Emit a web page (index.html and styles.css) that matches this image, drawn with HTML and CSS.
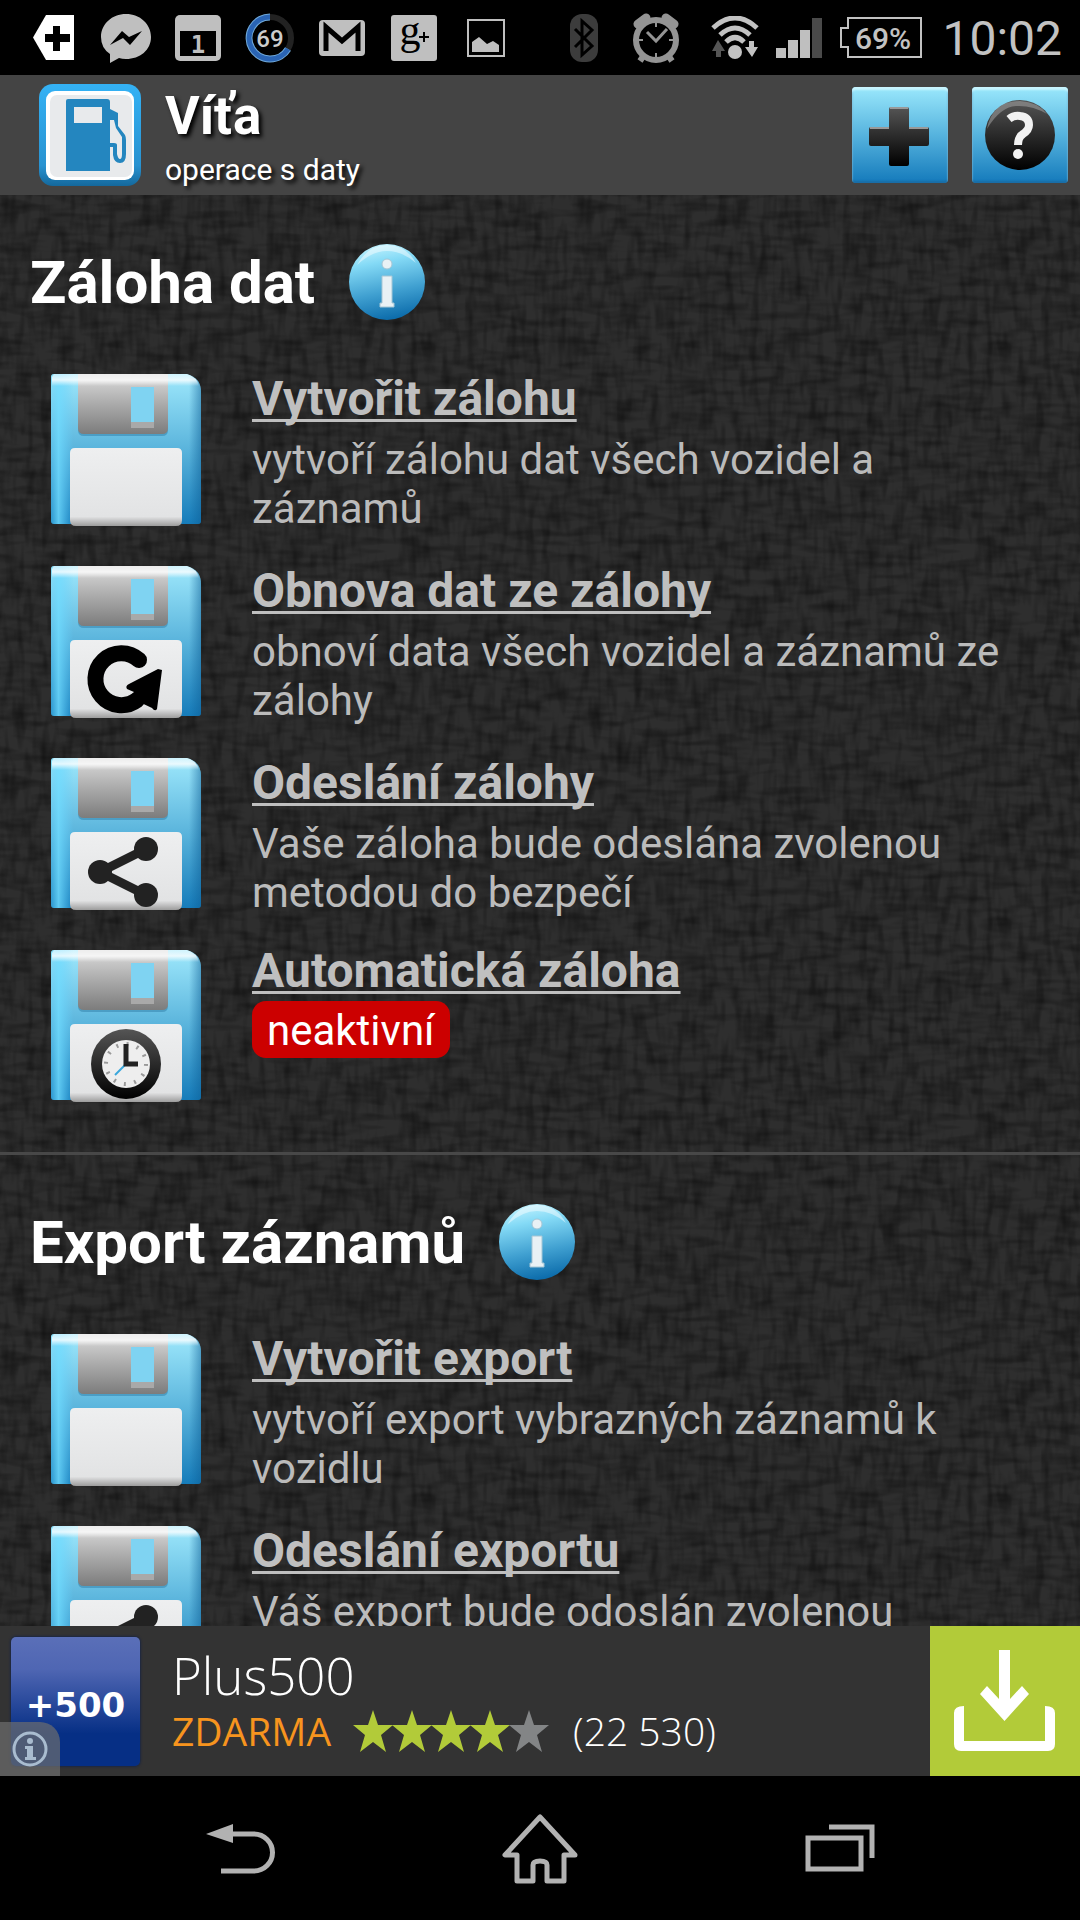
FILE: index.html
```html
<!DOCTYPE html>
<html lang="cs">
<head>
<meta charset="utf-8">
<meta name="viewport" content="width=device-width, initial-scale=1">
<title>Víťa - operace s daty</title>
<link rel="stylesheet" href="styles.css">
</head>
<body>

<!-- shared icon parts -->
<svg class="defs" aria-hidden="true">
  <defs>
    <linearGradient id="blue" x1="0" y1="0" x2="0" y2="1">
      <stop offset="0" stop-color="#9ee8fc"/>
      <stop offset="0.5" stop-color="#5ab4dc"/>
      <stop offset="1" stop-color="#167cba"/>
    </linearGradient>
    <linearGradient id="side" x1="0" y1="0" x2="1" y2="0">
      <stop offset="0" stop-color="#5fd0f8" stop-opacity="0.3"/>
      <stop offset="0.05" stop-color="#6fdcff" stop-opacity="0.8"/>
      <stop offset="0.15" stop-color="#5fd0ff" stop-opacity="0"/>
      <stop offset="0.92" stop-color="#0b5c94" stop-opacity="0"/>
      <stop offset="1" stop-color="#0b5c94" stop-opacity="0.5"/>
    </linearGradient>
    <linearGradient id="shine" x1="0" y1="0" x2="0" y2="1">
      <stop offset="0" stop-color="#fff" stop-opacity="0.5"/>
      <stop offset="0.5" stop-color="#fff" stop-opacity="0.8"/>
      <stop offset="1" stop-color="#fff" stop-opacity="0"/>
    </linearGradient>
    <linearGradient id="metal" x1="0" y1="0" x2="0" y2="1">
      <stop offset="0" stop-color="#dcdcdc"/>
      <stop offset="0.4" stop-color="#b4b4b4"/>
      <stop offset="1" stop-color="#7c7c7c"/>
    </linearGradient>
    <linearGradient id="paper" x1="0" y1="0" x2="0" y2="1">
      <stop offset="0" stop-color="#eeeff0"/>
      <stop offset="0.88" stop-color="#e2e3e4"/>
      <stop offset="1" stop-color="#9c9c9c"/>
    </linearGradient>
    <linearGradient id="dark" x1="0" y1="0" x2="0" y2="1">
      <stop offset="0" stop-color="#555"/>
      <stop offset="0.5" stop-color="#2a2a2a"/>
      <stop offset="1" stop-color="#000"/>
    </linearGradient>
    <linearGradient id="ball" x1="0.3" y1="0" x2="0.5" y2="1">
      <stop offset="0" stop-color="#c5f4ff"/>
      <stop offset="0.25" stop-color="#84daf6"/>
      <stop offset="0.65" stop-color="#3f9fd0"/>
      <stop offset="1" stop-color="#0c6cab"/>
    </linearGradient>
    <linearGradient id="frame" x1="0" y1="0" x2="0" y2="1">
      <stop offset="0" stop-color="#34b2f5"/>
      <stop offset="0.8" stop-color="#2992d0"/>
      <stop offset="1" stop-color="#14689c"/>
    </linearGradient>
    <symbol id="floppy" viewBox="0 0 150 152">
      <path d="M3 0H136Q150 4 150 18V147Q150 150 147 150H3Q0 150 0 147V3Q0 0 3 0Z" fill="url(#blue)"/>
      <path d="M3 0H136Q150 4 150 18V147Q150 150 147 150H3Q0 150 0 147V3Q0 0 3 0Z" fill="url(#side)"/>
      <path d="M3 0H136Q146 3 148 12H1V3Z" fill="url(#shine)"/>
      <path d="M27 0H117V56Q117 62 111 62H33Q27 62 27 56Z" fill="#2f7ea8" opacity="0.5"/>
      <path d="M27 0H117V54Q117 60 111 60H33Q27 60 27 54Z" fill="url(#metal)"/>
      <path d="M27 0H117V12H27Z" fill="url(#shine)"/>
      <path d="M80 48H103V54H80Z" fill="#a9a9a9"/>
      <path d="M80 13H103V48H80Z" fill="#7fd3f2"/>
      <path d="M24 74H126Q131 74 131 79V146Q131 152 125 152H25Q19 152 19 146V79Q19 74 24 74Z" fill="url(#paper)"/>
    </symbol>
    <symbol id="share" viewBox="0 0 150 152">
      <path d="M95 91L49 114L95 137" fill="none" stroke="#222" stroke-width="9"/>
      <g fill="#222"><circle cx="49" cy="114" r="12"/><circle cx="95" cy="91" r="12"/><circle cx="95" cy="137" r="12"/></g>
    </symbol>
    <symbol id="info" viewBox="0 0 78 78">
      <circle cx="39" cy="39" r="38" fill="url(#ball)"/>
      <path d="M9 22Q20 2 39 2T68 20Q54 8 39 8T9 22Z" fill="#fff" opacity="0.45"/>
      <g fill="#e8f1f5" stroke="#a5c6d5" stroke-width="1">
        <circle cx="39" cy="21" r="5"/>
        <path d="M34 33H44V60H46V64H32V60H34Z"/>
      </g>
    </symbol>
    <symbol id="star" viewBox="0 0 40 42">
      <path d="M20 0L25 15H40L28 25L33 42L20 32L7 42L12 25L0 15H15Z"/>
    </symbol>
  </defs>
</svg>

<div class="statusbar">
  <div class="notifications">
    <svg class="status-icon" viewBox="0 0 72 72"><path fill="#fff" d="M28 13H56V58H28L15 35.500Z"/><path d="M35 24H42V32H52V40H42V49H35V40H27V32H35Z"/></svg>
    <svg class="status-icon" viewBox="0 0 72 72"><path fill="#bfbfbf" d="M36 12C22 12 11 22 11 35Q11 46 20 52V61L29 56Q32 57 36 57C50 57 61 48 61 35S50 12 36 12Z"/><path d="M20 43L32 29L39 35L52 29L40 43L33 36Z"/></svg>
    <svg class="status-icon" viewBox="0 0 72 72"><rect x="13" y="13" width="46" height="46" rx="5" fill="#bfbfbf"/><path d="M18 29H54V54H18Z"/><text x="36" y="51" class="glyph-day">1</text></svg>
    <svg class="status-icon" viewBox="0 0 72 72"><circle cx="36" cy="36" r="21" fill="none" stroke="#222" stroke-width="6"/><path d="M36 15A21 21 0 1 0 54 47" fill="none" stroke="#6fa8d8" stroke-width="7"/><path d="M36 15A21 21 0 1 0 54 47" fill="none" stroke="#2a64b4" stroke-width="5"/><text x="36" y="45" class="glyph-percent">69</text></svg>
    <svg class="status-icon" viewBox="0 0 72 72"><rect x="13" y="18" width="46" height="36" rx="4" fill="#bfbfbf"/><path d="M20 49V25L36 39L52 25V49" fill="none" stroke="#000" stroke-width="5"/></svg>
    <svg class="status-icon" viewBox="0 0 72 72"><rect x="13" y="13" width="46" height="46" rx="3" fill="#bfbfbf"/><text x="32" y="42" class="glyph-g">g</text><path d="M41 35H51M46 30V40" stroke="#000" stroke-width="2"/></svg>
    <svg class="status-icon" viewBox="0 0 72 72"><path d="M18 18H54V54H18Z" fill="none" stroke="#bfbfbf" stroke-width="2"/><path d="M22 50V40L29 35L37 42L43 39L49 43V50Z" fill="#bfbfbf"/></svg>
  </div>
  <div class="system">
    <svg class="bluetooth" viewBox="0 0 28 48"><rect width="28" height="48" rx="12" fill="#3c3c3c"/><path d="M5 15L22 32L12 41V7L22 16L5 33" fill="none" stroke="#000" stroke-width="3"/></svg>
    <svg class="alarm" viewBox="0 0 48 50">
      <g fill="none" stroke="#949494"><circle cx="24" cy="27" r="20" stroke-width="6"/><path d="M6 11L14 5M42 11L34 5" stroke-width="9" stroke-linecap="round"/><path d="M12 42L8 48M36 42L40 48" stroke-width="6"/><path d="M24 9V14M24 40V45M6 27H11M37 27H42" stroke-width="2"/><path d="M15 19L24 28L35 16" stroke-width="3"/></g>
    </svg>
    <svg class="wifi" viewBox="0 0 48 44">
      <g fill="none" stroke="#c2c2c2" stroke-width="5"><path d="M2 12Q24 -8 46 12"/><path d="M9 19Q24 5 39 19"/><path d="M15 26Q24 17 33 26"/></g>
      <circle cx="24" cy="36" r="7" fill="#c2c2c2"/><path d="M7 24L14 35H10V41H5V35H1Z" fill="#555"/><path d="M38 25H43V31H47L41 41L34 31H38Z" fill="#c2c2c2"/>
    </svg>
    <svg class="signal" viewBox="0 0 46 42"><path d="M0 31H10V41H0ZM12 23H22V41H12ZM24 13H34V41H24Z" fill="#bfbfbf"/><path d="M36 1H46V41H36Z" fill="#4a4a4a"/></svg>
    <svg class="battery" viewBox="0 0 82 42"><path d="M8 1H81V40H8V30H1V11H8Z" fill="none" stroke="#c2c2c2" stroke-width="2"/><text x="43" y="32" class="glyph-battery">69%</text></svg>
    <span class="clock">10:02</span>
  </div>
</div>

<header class="header">
  <svg class="logo" viewBox="0 0 102 102">
    <rect width="102" height="102" rx="14" fill="url(#frame)"/>
    <rect x="7" y="7" width="88" height="89" rx="9" fill="#fff"/>
    <rect x="11" y="11" width="82" height="82" rx="7" fill="#e8eaec"/>
    <path d="M27 17Q27 15 29 15H68Q71 15 71 18V25L79 29V42L86 51Q87 53 87 56V70Q87 79 81 79T74 71V63H71V87H27ZM35 23V39H63V23Z" fill="#2486bf" fill-rule="evenodd"/>
    <path d="M71 36H75L77 44L83 53V70Q83 75 81 75T78 70V61Q78 59 75 59H71Z" fill="#e8eaec"/>
  </svg>
  <div class="header-text">
    <h1>Víťa</h1>
    <p>operace s daty</p>
  </div>
  <div class="header-right">
    <button class="square" type="button" aria-label="Přidat">
      <svg viewBox="0 0 96 96"><path d="M39 20H55Q57 20 57 22V40H75Q77 40 77 42V57Q77 59 75 59H57V77Q57 79 55 79H39Q37 79 37 77V59H19Q17 59 17 57V42Q17 40 19 40H37V22Q37 20 39 20Z" fill="url(#dark)"/><path d="M38 21H56M18 41H37M57 41H76" stroke="#999" stroke-width="2"/></svg>
    </button>
    <button class="square" type="button" aria-label="Nápověda">
      <svg viewBox="0 0 96 96"><circle cx="48" cy="48" r="35" fill="url(#dark)"/><path d="M15 42Q20 14 48 14Q66 15 75 27Q60 18 44 19T15 42Z" fill="#aaa" opacity="0.5"/><path d="M37 32Q42 28 48 29Q57 30 57 38Q57 43 51 47Q46 50 46 58" fill="none" stroke="#f2f2f2" stroke-width="8"/><circle cx="46" cy="67" r="5" fill="#f2f2f2"/></svg>
    </button>
  </div>
</header>

<main class="content">
  <section class="section">
    <div class="section-title">
      <h2>Záloha dat</h2>
      <button class="info" type="button" aria-label="Informace o záloze"><svg viewBox="0 0 78 78"><use href="#info"/></svg></button>
    </div>
    <ul class="items">
      <li class="item">
        <svg class="disk" viewBox="0 0 150 152"><use href="#floppy"/></svg>
        <div class="item-text">
          <a href="#zaloha">Vytvořit zálohu</a>
          <p>vytvoří zálohu dat všech vozidel a záznamů</p>
        </div>
      </li>
      <li class="item">
        <svg class="disk" viewBox="0 0 150 152"><use href="#floppy"/>
          <path d="M88 94A26 26 0 1 0 86 134" fill="none" stroke="#000" stroke-width="16" stroke-linecap="round"/>
          <path d="M111 104L106 143Q104 146 101 142L82 133Q79 129 83 126L76 123Q74 120 78 118L107 103Z"/>
        </svg>
        <div class="item-text">
          <a href="#obnova">Obnova dat ze zálohy</a>
          <p>obnoví data všech vozidel a záznamů ze zálohy</p>
        </div>
      </li>
      <li class="item">
        <svg class="disk" viewBox="0 0 150 152"><use href="#floppy"/><use href="#share"/></svg>
        <div class="item-text">
          <a href="#odeslani">Odeslání zálohy</a>
          <p>Vaše záloha bude odeslána zvolenou metodou do bezpečí</p>
        </div>
      </li>
      <li class="item">
        <svg class="disk" viewBox="0 0 150 152"><use href="#floppy"/>
          <circle cx="75" cy="114" r="35" fill="url(#dark)"/>
          <circle cx="75" cy="114" r="24" fill="#eee"/>
          <circle cx="75" cy="114" r="20" fill="none" stroke="#999" stroke-width="4" stroke-dasharray="2 8.470"/>
          <path d="M75 114L64 125" stroke="#3aa7dc" stroke-width="2"/>
          <path d="M75 94V114H87" fill="none" stroke="#222" stroke-width="5"/>
        </svg>
        <div class="item-text item-status">
          <a href="#automaticka">Automatická záloha</a>
          <span class="badge">neaktivní</span>
        </div>
      </li>
    </ul>
  </section>

  <section class="section">
    <div class="section-title">
      <h2>Export záznamů</h2>
      <button class="info" type="button" aria-label="Informace o exportu"><svg viewBox="0 0 78 78"><use href="#info"/></svg></button>
    </div>
    <ul class="items">
      <li class="item">
        <svg class="disk" viewBox="0 0 150 152"><use href="#floppy"/></svg>
        <div class="item-text">
          <a href="#export">Vytvořit export</a>
          <p>vytvoří export vybrazných záznamů k vozidlu</p>
        </div>
      </li>
      <li class="item">
        <svg class="disk" viewBox="0 0 150 152"><use href="#floppy"/><use href="#share"/></svg>
        <div class="item-text">
          <a href="#odeslani-exportu">Odeslání exportu</a>
          <p>Váš export bude odoslán zvolenou</p>
        </div>
      </li>
    </ul>
  </section>
</main>

<aside class="ad">
  <div class="ad-logo">+500</div>
  <div class="ad-text">
    <div class="ad-name">Plus500</div>
    <div class="ad-row">
      <span class="price">ZDARMA</span>
      <svg class="stars" viewBox="0 0 198 42" role="img" aria-label="4 z 5">
        <g fill="#b2cb39">
          <use href="#star" x="0" width="40" height="42"/>
          <use href="#star" x="39" width="40" height="42"/>
          <use href="#star" x="78" width="40" height="42"/>
          <use href="#star" x="117" width="40" height="42"/>
        </g>
        <use href="#star" x="156" width="40" height="42" fill="#838586"/>
      </svg>
      <span class="votes">(22 530)</span>
    </div>
  </div>
  <button class="download" type="button" aria-label="Stáhnout">
    <svg viewBox="0 0 150 150"><path d="M69 24H80V73L92 60L99 68L74.500 95L50 68L57 60L69 73Z" fill="#fff"/><path d="M34 80V115H115V80Q125 80 125 87V118Q125 125 118 125H31Q24 125 24 118V87Q24 80 34 80Z" fill="#fff"/></svg>
  </button>
  <button class="ad-info" type="button" aria-label="O reklamě">
    <svg viewBox="0 0 36 36"><circle cx="18" cy="18" r="16" fill="none" stroke="#a9bccf" stroke-width="3"/><circle cx="18" cy="10" r="3" fill="#a9bccf"/><path d="M13 15H21V26H24V29H13V26H15V18H13Z" fill="#a9bccf"/></svg>
  </button>
</aside>

<nav class="navbar">
  <button type="button" aria-label="Zpět"><svg viewBox="0 0 80 72"><path d="M6 22L33 12V31Z" fill="#b2b2b2"/><path d="M30 22H54A18 18 0 0 1 54 59H21" fill="none" stroke="#b2b2b2" stroke-width="5"/></svg></button>
  <button type="button" aria-label="Domů"><svg viewBox="0 0 80 72"><path d="M40 5L5 43H17V69H33V53Q33 49 40 49T47 53V69H64V43H75Z" fill="none" stroke="#b2b2b2" stroke-width="5" stroke-linejoin="round"/></svg></button>
  <button type="button" aria-label="Poslední aplikace"><svg viewBox="0 0 80 72"><path d="M8 26H61V57H8Z" fill="none" stroke="#b2b2b2" stroke-width="5"/><path d="M29 15H72V46" fill="none" stroke="#b2b2b2" stroke-width="5"/></svg></button>
</nav>

</body>
</html>
```
FILE: styles.css
```css
* { box-sizing: border-box; }

body {
  margin: 0;
  height: 100vh;
  display: flex;
  flex-direction: column;
  overflow: hidden;
  background: #000;
  color: #fff;
  font-family: Roboto, Arial, sans-serif;
}

h1, h2, p, ul { margin: 0; padding: 0; }

button {
  padding: 0;
  border: 0;
  background: none;
  cursor: pointer;
}

svg { display: block; }

.defs {
  position: absolute;
  width: 0;
  height: 0;
}

/* status bar */
.statusbar {
  flex: none;
  display: flex;
  justify-content: space-between;
  align-items: center;
  height: 75px;
  padding: 0 18px;
}

.notifications, .system {
  display: flex;
  align-items: center;
}

.status-icon { width: 72px; height: 72px; }

.bluetooth { width: 28px; height: 48px; margin-right: 34px; }
.alarm { width: 48px; height: 50px; margin-right: 31px; }
.wifi { width: 48px; height: 44px; margin-right: 17px; }
.signal { width: 46px; height: 42px; margin-right: 18px; }
.battery { width: 82px; height: 42px; margin-right: 20px; }

.clock {
  padding-top: 2px;
  color: #c2c2c2;
  font-size: 48px;
  line-height: 56px;
}

.glyph-day {
  fill: #bfbfbf;
  font: bold 24px "DejaVu Sans Mono", monospace;
  text-anchor: middle;
}

.glyph-percent {
  fill: #ccc;
  font: 500 24px Roboto, sans-serif;
  text-anchor: middle;
}

.glyph-g {
  font: 42px "Liberation Serif", serif;
  text-anchor: middle;
}

.glyph-battery {
  fill: #c2c2c2;
  font: 500 30px Roboto, sans-serif;
  text-anchor: middle;
}

/* app header */
.header {
  flex: none;
  display: flex;
  align-items: center;
  height: 120px;
  padding: 0 12px 0 39px;
  background: #444;
}

.logo {
  width: 102px;
  height: 102px;
  margin-right: 24px;
}

.header-text {
  flex: 1;
  padding-top: 10px;
  text-shadow: 3px 3px 4px #000;
}

.header-text h1 {
  font-size: 53px;
  line-height: 60px;
}

.header-text p {
  font-size: 30px;
  line-height: 48px;
}

.header-right {
  display: flex;
  gap: 24px;
}

.square {
  width: 96px;
  height: 96px;
  border-radius: 4px;
  background: linear-gradient(#9ae8fc, #56b3de 50%, #147abb);
  box-shadow: inset 0 3px 2px #c9f5ff, inset 0 -2px 2px #1a6da5;
}

/* woven dark cloth behind the list */
.content {
  flex: 1;
  min-height: 0;
  overflow: hidden;
  background-color: #292929;
  background-image: url("data:image/svg+xml,%3Csvg xmlns='http://www.w3.org/2000/svg' width='576' height='576'%3E%3Cfilter id='a' x='0' y='0' width='100%25' height='100%25'%3E%3CfeTurbulence type='fractalNoise' baseFrequency='.03 .12' numOctaves='2' seed='3' stitchTiles='stitch'/%3E%3CfeColorMatrix values='0 0 0 0 0 0 0 0 0 0 0 0 0 0 0 2 0 0 0 -.85'/%3E%3C/filter%3E%3Cfilter id='b' x='0' y='0' width='100%25' height='100%25'%3E%3CfeTurbulence type='fractalNoise' baseFrequency='.12 .03' numOctaves='2' seed='8' stitchTiles='stitch'/%3E%3CfeColorMatrix values='0 0 0 0 0 0 0 0 0 0 0 0 0 0 0 2 0 0 0 -.85'/%3E%3C/filter%3E%3Crect width='576' height='576' fill='%232e2e2e'/%3E%3Crect width='576' height='576' filter='url(%23a)' opacity='.4'/%3E%3Crect width='576' height='576' filter='url(%23b)' opacity='.4'/%3E%3C/svg%3E");
}

.section {
  padding: 48px 30px 20px;
  border-bottom: 3px solid #484848;
}

.section-title {
  display: flex;
  align-items: center;
  gap: 33px;
  height: 78px;
}

.section-title h2 {
  padding-top: 2px;
  font-size: 60px;
  line-height: 72px;
}

.info {
  width: 78px;
  height: 78px;
}

.items {
  padding: 43px 20px 0 21px;
  list-style: none;
}

.item {
  display: flex;
  gap: 51px;
  height: 192px;
  padding-top: 10px;
}

.disk {
  flex: none;
  width: 150px;
  height: 152px;
}

.item-text {
  flex: 1;
  margin-top: -3px;
  color: #bbb;
}

.item-text a {
  display: block;
  color: #bfbfbf;
  font-size: 48px;
  font-weight: bold;
  line-height: 56px;
  text-decoration: underline;
  text-decoration-thickness: 3px;
  text-underline-offset: 4px;
  text-decoration-skip-ink: none;
}

.item-text p {
  padding-top: 8px;
  font-size: 42px;
  line-height: 49px;
}

.item-status { margin-top: -7px; }

.badge {
  display: inline-block;
  margin-top: 2px;
  padding: 5px 15px 3px;
  border-radius: 14px;
  background: #c00;
  color: #fff;
  font-size: 42px;
  line-height: 49px;
}

/* ad banner */
.ad {
  flex: none;
  position: relative;
  display: flex;
  align-items: center;
  height: 150px;
  padding-left: 11px;
  background: #333;
  font-family: "Open Sans", sans-serif;
}

.ad-logo {
  width: 129px;
  height: 129px;
  margin-right: 32px;
  padding-top: 8px;
  border-radius: 5px;
  background: linear-gradient(#5a6fb8, #4f66b3 25%, #062f85 75%);
  box-shadow: 0 0 3px #00194f;
  font: bold 34px/120px "DejaVu Sans", sans-serif;
  text-align: center;
}

.ad-text {
  flex: 1;
  padding-bottom: 5px;
}

.ad-name {
  font-size: 51px;
  font-weight: 300;
  line-height: 64px;
}

.ad-row {
  display: flex;
  align-items: center;
  font-size: 39px;
  line-height: 48px;
}

.price {
  color: #f7941e;
  font-weight: 500;
}

.stars {
  width: 198px;
  height: 42px;
  margin: 0 22px;
}

.votes { font-weight: 300; }

.download {
  width: 150px;
  height: 150px;
  background: #b2cb39;
}

.ad-info {
  position: absolute;
  left: 0;
  bottom: 0;
  width: 60px;
  height: 54px;
  padding: 0 12px;
  border-radius: 0 20px 0 0;
  background: rgba(110, 110, 110, 0.7);
}

/* system navigation */
.navbar {
  flex: none;
  display: grid;
  grid-template-columns: repeat(3, 1fr);
  height: 144px;
  padding: 0 90px;
}

.navbar button {
  display: flex;
  align-items: center;
  justify-content: center;
}

.navbar svg {
  width: 80px;
  height: 72px;
}
```
